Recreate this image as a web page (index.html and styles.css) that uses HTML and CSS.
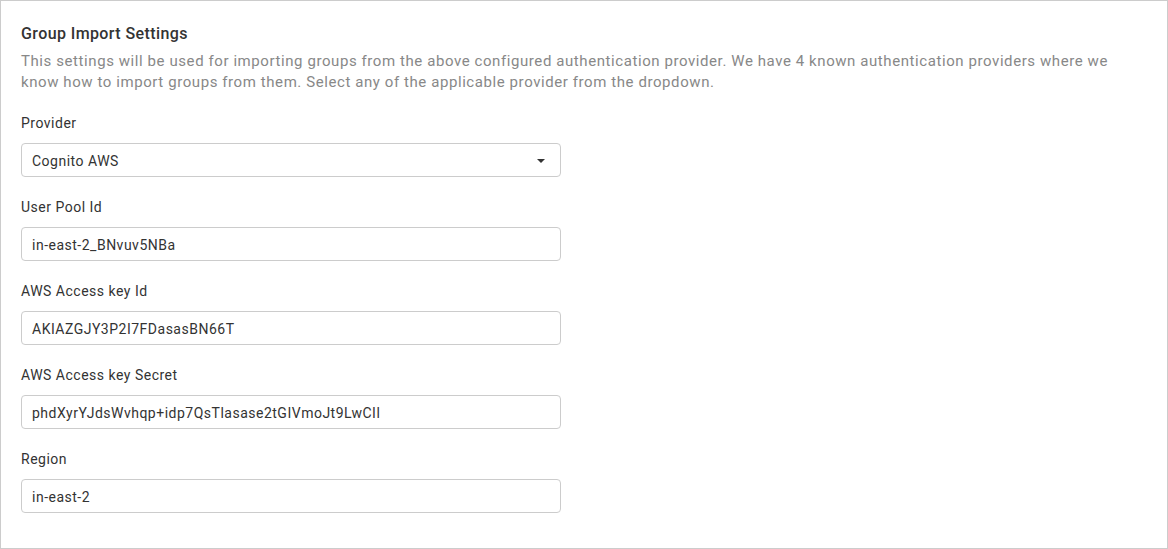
FILE: index.html
```html
<!DOCTYPE html>
<html>
<head>
<meta charset="utf-8">
<link rel="stylesheet" href="styles.css">
</head>
<body>
<div class="panel">
  <h2 class="title">Group Import Settings</h2>
  <p class="desc">This settings will be used for importing groups from the above configured authentication provider. We have 4 known authentication providers where we know how to import groups from them. Select any of the applicable provider from the dropdown.</p>
  <div class="fields">
    <div class="field">
      <label class="label">Provider</label>
      <div class="input select">
        <span>Cognito AWS</span>
        <svg class="caret" width="8" height="4" viewBox="0 0 8 4"><path d="M0 0 L8 0 L4 4 Z" fill="#333"/></svg>
      </div>
    </div>
    <div class="field">
      <label class="label">User Pool Id</label>
      <div class="input">in-east-2_BNvuv5NBa</div>
    </div>
    <div class="field">
      <label class="label">AWS Access key Id</label>
      <div class="input">AKIAZGJY3P2I7FDasasBN66T</div>
    </div>
    <div class="field">
      <label class="label">AWS Access key Secret</label>
      <div class="input">phdXyrYJdsWvhqp+idp7QsTlasase2tGIVmoJt9LwCIl</div>
    </div>
    <div class="field">
      <label class="label">Region</label>
      <div class="input">in-east-2</div>
    </div>
  </div>
</div>
</body>
</html>
```
FILE: styles.css
```css
* { box-sizing: border-box; }
html, body { margin: 0; padding: 0; background: #fff; }
body { font-family: Roboto, "Liberation Sans", sans-serif; color: #333; letter-spacing: 0.5px; }
.panel {
  width: 1168px;
  height: 549px;
  border: 1px solid #cccccc;
  padding: 23px 20px 0 20px;
}
.title {
  margin: 0;
  font-size: 16px;
  line-height: 20px;
  font-weight: 500;
  color: #333;
  letter-spacing: 0.4px;
}
.desc {
  margin: 7px 0 0 0;
  max-width: 1110px;
  font-size: 15px;
  line-height: 21px;
  color: #888;
  letter-spacing: 0.58px;
}
.fields {
  margin-top: 20px;
  display: flex;
  flex-direction: column;
  gap: 20px;
}
.field {
  display: flex;
  flex-direction: column;
  gap: 10px;
}
.label {
  font-size: 14px;
  line-height: 20px;
  color: #333;
}
.input {
  width: 540px;
  height: 34px;
  border: 1px solid #cccccc;
  border-radius: 4px;
  padding: 1px 10px 0 10px;
  font-size: 14px;
  display: flex;
  align-items: center;
  color: #333;
}
.select { justify-content: space-between; padding-right: 15px; }
.caret { display: block; width: 8px; height: 4px; }
```
